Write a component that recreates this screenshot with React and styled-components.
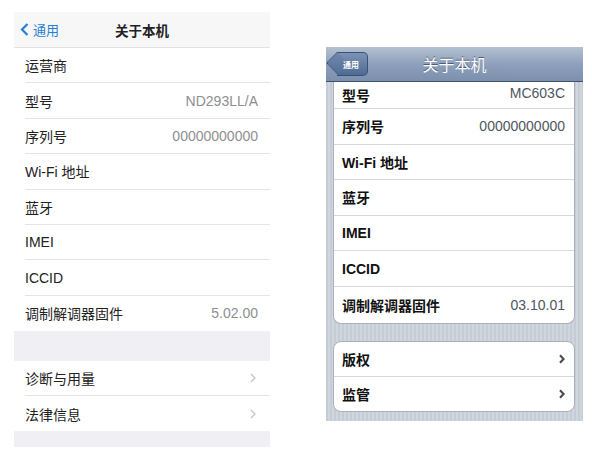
import React from 'react'
import styled, { createGlobalStyle } from 'styled-components'

const GlobalStyle = createGlobalStyle`
  html, body {
    margin: 0;
    padding: 0;
    background: #fff;
  }
  body {
    font-family: "Liberation Sans", "Noto Sans CJK SC", sans-serif;
  }
`

const Page = styled.div`
  display: flex;
  align-items: flex-start;
  width: 592px;
  height: 457px;
  overflow: hidden;
`

/* ---------- iOS 7 style (left) ---------- */

const Flat = styled.div`
  width: 256px;
  margin: 12px 0 0 14px;
  background: #efeff4;
  display: flex;
  flex-direction: column;
`

const FlatNav = styled.div`
  height: 36px;
  background: #f7f7f8;
  border-bottom: 1px solid #e2e2e5;
  box-sizing: border-box;
  display: grid;
  grid-template-columns: 1fr auto 1fr;
  align-items: center;
  padding: 0 0 0 6px;
`

const FlatBack = styled.div`
  display: flex;
  align-items: center;
  gap: 4px;
  color: #2a7fd4;
  font-size: 13px;
  svg {
    width: 9px;
    height: 13px;
  }
`

const FlatTitle = styled.div`
  font-size: 13.5px;
  font-weight: 700;
  color: #222;
  padding-right: 6px;
`

const FlatGroup = styled.div`
  background: #fff;
  padding-left: 11px;
`

const FlatRow = styled.div`
  height: ${p => p.$h || 35.4}px;
  box-sizing: border-box;
  display: flex;
  align-items: center;
  justify-content: space-between;
  padding-right: 12px;
  border-bottom: ${p => (p.$last ? 'none' : '1px solid #e4e4e6')};
  font-size: 14px;
  color: #222;
`

const FlatValue = styled.span`
  color: #8e8e93;
  font-size: 14px;
`

const Chevron = styled.svg`
  width: 6px;
  height: 10px;
  margin-right: ${p => p.$mr || 0}px;
`

const Spacer = styled.div`
  height: ${p => p.$h}px;
`

/* ---------- iOS 6 style (right) ---------- */

const Classic = styled.div`
  width: 257px;
  margin: 47px 0 0 56px;
  background-color: #c9d0d9;
  background-image: repeating-linear-gradient(
    90deg,
    #c5ccd5 0px,
    #c5ccd5 2px,
    #d0d6de 2px,
    #d0d6de 4px
  );
  display: flex;
  flex-direction: column;
  padding-bottom: 9px;
`

const ClassicNav = styled.div`
  height: 35px;
  background: linear-gradient(#b5c1d1, #8ea0ba 50%, #7b90ae);
  border-bottom: 1px solid #3e5270;
  box-sizing: border-box;
  display: grid;
  grid-template-columns: 1fr auto 1fr;
  align-items: center;
  padding-left: 5px;
`

const ClassicBack = styled.div`
  justify-self: start;
  position: relative;
  height: 22px;
  margin-left: 6px;
  padding: 0 8px 0 6px;
  display: flex;
  align-items: center;
  background: linear-gradient(#7c93b5, #4e6a94);
  border: 1px solid #3b5276;
  border-left: none;
  border-radius: 0 5px 5px 0;
  color: #fff;
  font-size: 8px;
  font-weight: 700;
  &::before {
    content: '';
    position: absolute;
    left: -8px;
    top: 2px;
    width: 15px;
    height: 15px;
    transform: rotate(45deg);
    background: linear-gradient(135deg, #7288aa, #56709a);
    border-left: 1px solid #3b5276;
    border-bottom: 1px solid #3b5276;
    border-radius: 0 0 0 3px;
  }
  span {
    position: relative;
  }
`

const ClassicTitle = styled.div`
  color: #fff;
  font-size: 16px;
  text-shadow: 0 -1px 0 #4a5d7a;
  padding-right: 5px;
`

const Card = styled.div`
  margin: ${p => (p.$top ? '0' : '17px')} 8px 0 7px;
  background: #fff;
  border: 1px solid #a9b0ba;
  border-top: ${p => (p.$top ? 'none' : '1px solid #a9b0ba')};
  border-radius: ${p => (p.$top ? '0 0 8px 8px' : '8px')};
  overflow: hidden;
`

const ClassicRow = styled.div`
  height: ${p => p.$h || 35.6}px;
  box-sizing: border-box;
  display: flex;
  align-items: ${p => (p.$clip ? 'flex-start' : 'center')};
  padding-top: ${p => (p.$clip ? '3px' : '0')};
  justify-content: space-between;
  padding-left: 8px;
  padding-right: 9px;
  border-bottom: ${p => (p.$last ? 'none' : '1px solid #d9d9d9')};
  font-size: 14px;
  font-weight: 700;
  color: #111;
`

const ClassicValue = styled.span`
  color: #4f5660;
  font-weight: 400;
  font-size: 14px;
`

const flatInfo = [
  ['运营商', ''],
  ['型号', 'ND293LL/A'],
  ['序列号', '00000000000'],
  ['Wi-Fi 地址', ''],
  ['蓝牙', ''],
  ['IMEI', ''],
  ['ICCID', ''],
  ['调制解调器固件', '5.02.00'],
]

const classicInfo = [
  ['序列号', '00000000000'],
  ['Wi-Fi 地址', ''],
  ['蓝牙', ''],
  ['IMEI', ''],
  ['ICCID', ''],
  ['调制解调器固件', '03.10.01'],
]

const ThinChevron = () => (
  <Chevron viewBox="0 0 6 10" $mr={2}>
    <path d="M1 1 L5 5 L1 9" fill="none" stroke="#c4c4c8" strokeWidth="1.3" />
  </Chevron>
)

const BoldChevron = () => (
  <Chevron viewBox="0 0 6 10">
    <path d="M1 1.2 L4.6 5 L1 8.8" fill="none" stroke="#4d4d4d" strokeWidth="2.2" />
  </Chevron>
)

const App = () => {
  return (
    <Page>
      <GlobalStyle />
      <Flat>
        <FlatNav>
          <FlatBack>
            <svg viewBox="0 0 9 13">
              <path d="M7.5 1 L2 6.5 L7.5 12" fill="none" stroke="#2a7fd4" strokeWidth="2.2" />
            </svg>
            通用
          </FlatBack>
          <FlatTitle>关于本机</FlatTitle>
          <div />
        </FlatNav>
        <FlatGroup>
          {flatInfo.map(([label, value], i) => (
            <FlatRow key={label} $last={i === flatInfo.length - 1}>
              <span>{label}</span>
              {value && <FlatValue>{value}</FlatValue>}
            </FlatRow>
          ))}
        </FlatGroup>
        <Spacer $h={30} />
        <FlatGroup>
          <FlatRow $h={35}>
            <span>诊断与用量</span>
            <ThinChevron />
          </FlatRow>
          <FlatRow $h={35} $last>
            <span>法律信息</span>
            <ThinChevron />
          </FlatRow>
        </FlatGroup>
        <Spacer $h={16} />
      </Flat>

      <Classic>
        <ClassicNav>
          <ClassicBack>
            <span>通用</span>
          </ClassicBack>
          <ClassicTitle>关于本机</ClassicTitle>
          <div />
        </ClassicNav>
        <Card $top>
          <ClassicRow $h={27} $clip>
            <span>型号</span>
            <ClassicValue>MC603C</ClassicValue>
          </ClassicRow>
          {classicInfo.map(([label, value], i) => (
            <ClassicRow key={label} $last={i === classicInfo.length - 1}>
              <span>{label}</span>
              {value && <ClassicValue>{value}</ClassicValue>}
            </ClassicRow>
          ))}
        </Card>
        <Card>
          <ClassicRow $h={35}>
            <span>版权</span>
            <BoldChevron />
          </ClassicRow>
          <ClassicRow $h={34} $last>
            <span>监管</span>
            <BoldChevron />
          </ClassicRow>
        </Card>
      </Classic>
    </Page>
  )
}

export default App
